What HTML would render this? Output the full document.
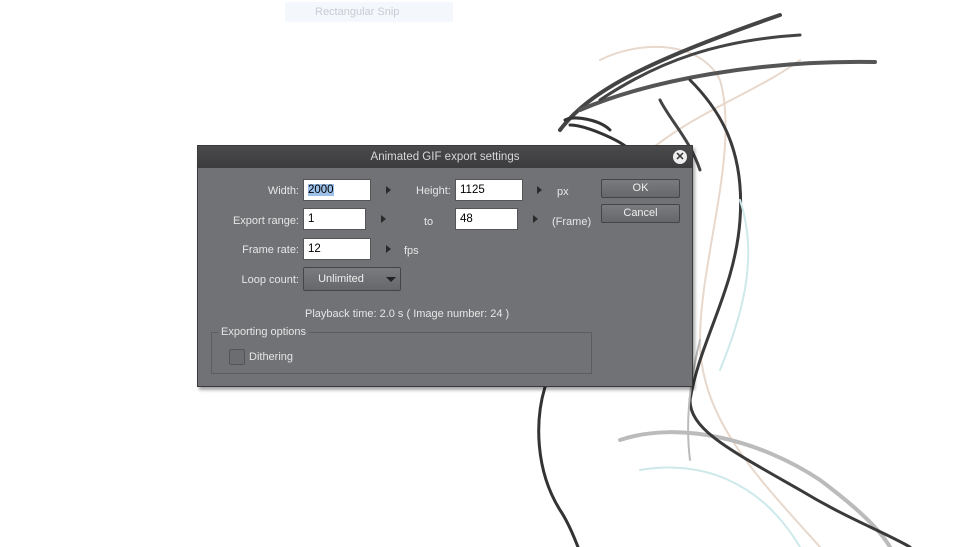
<!DOCTYPE html>
<html><head><style>
body{margin:0;width:960px;height:547px;background:#fff;position:relative;overflow:hidden;font-family:"Liberation Sans",sans-serif;font-size:11px}
.a{position:absolute}
.lbl{color:#e6e6e6;text-align:right;width:90px;left:209px}
.in{background:#fff;border:1px solid #555;color:#000;padding-left:4px;line-height:21px;height:22px;box-sizing:border-box;font-size:11.5px}
.tri{width:0;height:0;border-left:5px solid #2a2a2a;border-top:4px solid transparent;border-bottom:4px solid transparent}
.btn{background:linear-gradient(#7a7b7e,#66676a);border:1px solid #454545;border-radius:2px;color:#eee;text-align:center;box-sizing:border-box}
.t{color:#e6e6e6}
</style></head><body>
<svg class="a" style="left:0;top:0" width="960" height="547">
<g fill="none" stroke-linecap="round">
<path d="M580 300 C600 230 620 180 650 150 C700 110 760 90 800 60" stroke="#e8d8cc" stroke-width="2"/>
<path d="M600 60 C640 40 700 40 720 80 C740 150 700 260 700 340 C700 420 760 480 820 547" stroke="#e8d8cc" stroke-width="2"/>
<path d="M620 440 C680 420 760 440 820 480 C860 510 880 530 890 547" stroke="#bbb" stroke-width="4"/>
<path d="M640 470 C700 460 760 480 800 547" stroke="#cde9ea" stroke-width="2"/>
<path d="M560 130 C590 90 650 60 780 15" stroke="#444" stroke-width="4"/>
<path d="M580 110 C650 80 760 60 875 62" stroke="#555" stroke-width="4"/>
<path d="M600 100 C660 60 720 40 800 35" stroke="#444" stroke-width="3"/>
<path d="M565 120 C575 115 600 120 610 130 M570 125 C585 125 620 140 630 150" stroke="#333" stroke-width="3"/>
<path d="M690 80 C720 110 745 150 740 220 C735 290 700 340 690 400 C690 430 730 450 800 490 C850 520 880 530 910 547" stroke="#3a3a3a" stroke-width="3"/>
<path d="M660 100 C670 120 690 140 700 170" stroke="#444" stroke-width="3"/>
<path d="M545 387 C535 420 535 470 560 510 C570 525 575 540 578 547" stroke="#333" stroke-width="3"/>
<path d="M700 340 C690 380 685 420 690 460" stroke="#bbb" stroke-width="2"/>
<path d="M740 200 C760 260 740 320 720 370" stroke="#cde9ea" stroke-width="2"/>
</g>
</svg>
<div class="a" style="left:285px;top:2px;width:168px;height:20px;background:#f4f7fb;color:#c8ccd2;font-size:11px;line-height:20px;padding-left:30px;box-sizing:border-box">Rectangular Snip</div>
<div class="a" style="left:197px;top:145px;width:496px;height:242px;background:#717275;border:1px solid #3a3a3a;box-sizing:border-box;box-shadow:2px 3px 3px rgba(0,0,0,.35)">
<div style="height:22px;background:linear-gradient(#4a4a4c,#3c3c3e);color:#d8d8d8;text-align:center;line-height:22px;font-size:11.5px">Animated GIF export settings</div>
<div class="a" style="right:5px;top:4px;width:14px;height:14px;border-radius:50%;background:#eee;color:#333;font-size:11px;font-weight:bold;line-height:14px;text-align:center">✕</div>
</div>
<div class="a lbl" style="top:185px">Width:</div>
<div class="a in" style="left:303px;top:179px;width:68px"><span style="background:#9cc0e8">2000</span></div>
<div class="a tri" style="left:386px;top:186px"></div>
<div class="a t" style="left:416px;top:185px">Height:</div>
<div class="a in" style="left:455px;top:179px;width:68px">1125</div>
<div class="a tri" style="left:537px;top:186px"></div>
<div class="a t" style="left:557px;top:186px">px</div>
<div class="a lbl" style="top:215px">Export range:</div>
<div class="a in" style="left:303px;top:208px;width:63px">1</div>
<div class="a tri" style="left:381px;top:215px"></div>
<div class="a t" style="left:424px;top:216px">to</div>
<div class="a in" style="left:455px;top:208px;width:63px">48</div>
<div class="a tri" style="left:533px;top:215px"></div>
<div class="a t" style="left:552px;top:216px">(Frame)</div>
<div class="a lbl" style="top:244px">Frame rate:</div>
<div class="a in" style="left:303px;top:238px;width:68px">12</div>
<div class="a tri" style="left:386px;top:245px"></div>
<div class="a t" style="left:404px;top:245px">fps</div>
<div class="a lbl" style="top:274px">Loop count:</div>
<div class="a btn" style="left:303px;top:267px;width:98px;height:24px;line-height:22px;padding-right:22px">Unlimited</div>
<div class="a" style="left:386px;top:277px;border-top:5px solid #222;border-left:5px solid transparent;border-right:5px solid transparent"></div>
<div class="a btn" style="left:601px;top:179px;width:79px;height:19px;line-height:16px">OK</div>
<div class="a btn" style="left:601px;top:204px;width:79px;height:19px;line-height:16px">Cancel</div>
<div class="a t" style="left:305px;top:308px">Playback time: 2.0 s ( Image number: 24 )</div>
<div class="a" style="left:211px;top:332px;width:381px;height:42px;border:1px solid #5c5d60;box-sizing:border-box"></div>
<div class="a t" style="left:218px;top:326px;background:#717275;padding:0 3px">Exporting options</div>
<div class="a" style="left:229px;top:349px;width:14px;height:14px;border:1px solid #555;border-radius:2px;background:#6c6d70"></div>
<div class="a t" style="left:249px;top:351px">Dithering</div>
</body></html>
